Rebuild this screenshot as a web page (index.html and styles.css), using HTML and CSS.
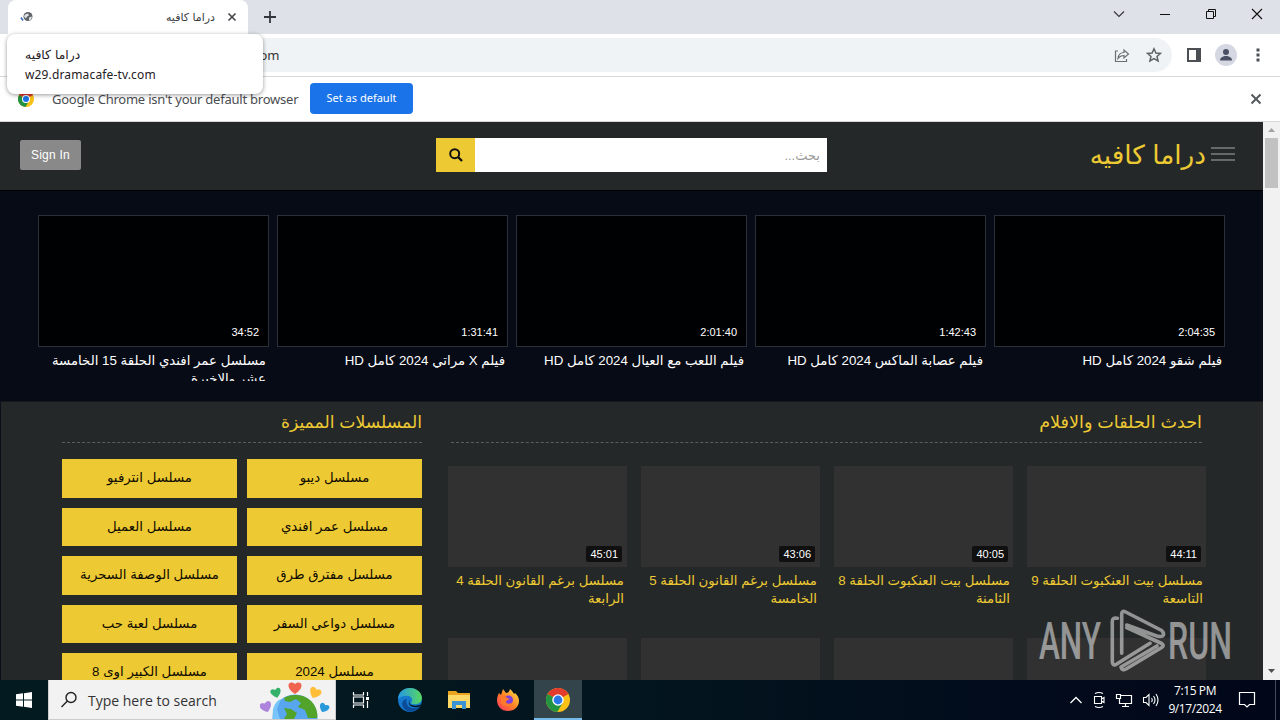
FILE: index.html
```html
<!DOCTYPE html>
<html lang="ar">
<head>
  <meta charset="UTF-8">
  <meta name="viewport" content="width=device-width, initial-scale=1.0">
  <title>دراما كافيه</title>
  <link rel="stylesheet" href="styles.css">
</head>
<body>
  <div class="tabstrip">
    <div class="tab">
      <svg class="favicon" width="14" height="14" viewBox="0 0 14 14"><circle cx="8" cy="6.500" r="4.500" fill="#5f6368"/><path d="M5 4.500l3-1 1 2-2 1-1 2-2-2zM9 7.500l3-1-1 3-2 1z" fill="#dfe3e8"/><path d="M1 7.500l2 3" fill="none" stroke="#3b6fc4" stroke-width="1.600"/></svg>
      <span class="tab-title" dir="rtl">دراما كافيه</span>
      <svg class="tab-close" width="10" height="10" viewBox="0 0 10 10"><path d="M1.500 1.500l7 7M8.500 1.500l-7 7" stroke="#45494d" stroke-width="1.700"/></svg>
    </div>
    <svg class="new-tab" width="12" height="12" viewBox="0 0 12 12"><path d="M6 0v12M0 6h12" stroke="#33373b" stroke-width="1.800"/></svg>
    <div class="window-buttons">
      <svg width="12" height="12" viewBox="0 0 12 12"><path d="M1 3.500l5 5 5-5" fill="none" stroke="#333" stroke-width="1.100"/></svg>
      <svg width="12" height="12" viewBox="0 0 12 12"><path d="M1 6.500h10" stroke="#111"/></svg>
      <svg width="12" height="12" viewBox="0 0 12 12"><path d="M1.500 3.500h7v7h-7zM3.500 3.500v-2h7v7h-2" fill="none" stroke="#111"/></svg>
      <svg width="12" height="12" viewBox="0 0 12 12"><path d="M1 1l10 10M11 1L1 11" stroke="#111" stroke-width="1.100"/></svg>
    </div>
  </div>

  <div class="toolbar">
    <div class="address">
      <span class="url">w29.dramacafe-tv.com</span>
      <svg width="16" height="16" viewBox="0 0 16 16"><path d="M4 4H1.500v10.500h11V12M4 11.500c.5-4.500 3-6 6-6V3l4.500 4-4.500 4V8.500c-2.500 0-4.500 1-6 3z" fill="none" stroke="#6b6f74" stroke-width="1.200"/></svg>
      <svg width="16" height="16" viewBox="0 0 16 16"><path d="M8 1.800l1.900 4.200 4.600.4-3.500 3 1.100 4.500L8 11.500l-4.100 2.400L5 9.400l-3.500-3 4.600-.4z" fill="none" stroke="#5f6368" stroke-width="1.500"/></svg>
    </div>
    <svg class="side-panel" width="14" height="14" viewBox="0 0 14 14"><path d="M1 1h12v12H1z" fill="none" stroke="#4b4f54" stroke-width="2"/><path d="M9 1h4v12H9z" fill="#4b4f54"/></svg>
    <svg class="avatar" width="22" height="22" viewBox="0 0 22 22"><circle cx="11" cy="11" r="11" fill="#d5d8e3"/><circle cx="11" cy="8" r="3" fill="#4a4f63"/><path d="M5 16.500c0-3 3-4.500 6-4.500s6 1.500 6 4.500z" fill="#4a4f63"/></svg>
    <svg class="menu-dots" width="4" height="14" viewBox="0 0 4 14"><path d="M.5.5h3v3h-3zM.5 5.500h3v3h-3zM.5 10.500h3v3h-3z" fill="#4b4f54"/></svg>
  </div>

  <div class="infobar">
    <svg class="chrome-logo" width="18" height="18" viewBox="0 0 18 18"><circle cx="9" cy="9" r="8" fill="#fbc116"/><path d="M9 9L2 5a8 8 0 0 1 14 0z" fill="#e33b2e"/><path d="M9 9L2 5a8 8 0 0 0 6.500 12L12 11z" fill="#229342"/><circle cx="9" cy="9" r="4" fill="#fff"/><circle cx="9" cy="9" r="3" fill="#1a73e8"/></svg>
    <span class="infobar-text">Google Chrome isn't your default browser</span>
    <button class="set-default">Set as default</button>
    <svg class="infobar-close" width="12" height="12" viewBox="0 0 12 12"><path d="M1.500 1.500l9 9M10.500 1.500l-9 9" stroke="#55595e" stroke-width="2"/></svg>
  </div>

  <div class="tab-tooltip">
    <div dir="rtl" class="tooltip-title">دراما كافيه</div>
    <div class="tooltip-host">w29.dramacafe-tv.com</div>
  </div>

  <div class="viewport">
    <div class="site" dir="rtl">
      <header class="header">
        <div class="brand">
          <div class="burger"><i></i><i></i><i></i></div>
          <a class="logo">دراما كافيه</a>
        </div>
        <div class="search">
          <input type="text" placeholder="بحث...">
          <button class="search-btn">
            <svg width="14" height="14" viewBox="0 0 14 14"><circle cx="5.700" cy="5.700" r="4.500" fill="none" stroke="#111" stroke-width="2"/><path d="M9 9l4 4" stroke="#111" stroke-width="2.400"/></svg>
          </button>
        </div>
        <button class="sign-in" dir="ltr">Sign In</button>
      </header>

      <section class="featured">
        <div class="movie">
          <div class="poster"><span class="time">2:04:35</span></div>
          <h3>فيلم شقو 2024 كامل HD</h3>
        </div>
        <div class="movie">
          <div class="poster"><span class="time">1:42:43</span></div>
          <h3>فيلم عصابة الماكس 2024 كامل HD</h3>
        </div>
        <div class="movie">
          <div class="poster"><span class="time">2:01:40</span></div>
          <h3>فيلم اللعب مع العيال 2024 كامل HD</h3>
        </div>
        <div class="movie">
          <div class="poster"><span class="time">1:31:41</span></div>
          <h3>فيلم X مراتي 2024 كامل HD</h3>
        </div>
        <div class="movie">
          <div class="poster"><span class="time">34:52</span></div>
          <h3>مسلسل عمر افندي الحلقة 15 الخامسة<br>عشر والاخيرة</h3>
        </div>
      </section>

      <main class="content">
        <section class="latest">
          <h2>احدث الحلقات والافلام</h2>
          <div class="episodes">
            <div class="episode">
              <div class="thumb"><span class="time">44:11</span></div>
              <h3>مسلسل بيت العنكبوت الحلقة 9<br>التاسعة</h3>
            </div>
            <div class="episode">
              <div class="thumb"><span class="time">40:05</span></div>
              <h3>مسلسل بيت العنكبوت الحلقة 8<br>الثامنة</h3>
            </div>
            <div class="episode">
              <div class="thumb"><span class="time">43:06</span></div>
              <h3>مسلسل برغم القانون الحلقة 5<br>الخامسة</h3>
            </div>
            <div class="episode">
              <div class="thumb"><span class="time">45:01</span></div>
              <h3>مسلسل برغم القانون الحلقة 4<br>الرابعة</h3>
            </div>
            <div class="episode"><div class="thumb"></div></div>
            <div class="episode"><div class="thumb"></div></div>
            <div class="episode"><div class="thumb"></div></div>
            <div class="episode"><div class="thumb"></div></div>
          </div>
        </section>

        <aside class="series">
          <h2>المسلسلات المميزة</h2>
          <div class="series-list">
            <a>مسلسل ديبو</a>
            <a>مسلسل انترفيو</a>
            <a>مسلسل عمر افندي</a>
            <a>مسلسل العميل</a>
            <a>مسلسل مفترق طرق</a>
            <a>مسلسل الوصفة السحرية</a>
            <a>مسلسل دواعي السفر</a>
            <a>مسلسل لعبة حب</a>
            <a>مسلسل 2024</a>
            <a>مسلسل الكبير اوى 8</a>
          </div>
        </aside>
      </main>
    </div>

    <div class="scrollbar">
      <svg width="17" height="16" viewBox="0 0 17 16"><path d="M5 10l3.500-4 3.500 4z" fill="#a3a3a3"/></svg>
      <div class="scroll-thumb"></div>
      <svg class="scroll-down" width="17" height="18" viewBox="0 0 17 18"><path d="M5 7l3.500 4 3.500-4z" fill="#505050"/></svg>
    </div>
  </div>

  <svg class="watermark" width="200" height="64" viewBox="0 0 200 64">
    <g class="watermark-text">
      <text x="1" y="50" textLength="62" lengthAdjust="spacingAndGlyphs">ANY</text>
      <text x="130" y="50" textLength="64" lengthAdjust="spacingAndGlyphs">RUN</text>
    </g>
    <path d="M79.300 9.300q-5-1-5 3v40q0 5 4 3L112 34.300M83.700 44.300V5q0-4 4-2l36 18.500q3 3 1 5.500-2 1-6 0L88.700 16M88.700 18.500l35 16q3 2 0 4L88 60q-4 2-5-2l36-21" fill="none" stroke="#fff" stroke-width="3.600" stroke-linejoin="round" stroke-linecap="round"/>
  </svg>

  <div class="taskbar">
    <div class="start"><svg width="16" height="16" viewBox="0 0 16 16"><path d="M0 2.300L7 1.300V7.500H0zM8 1.200L16 0v7.500H8zM0 8.500h7v6.200l-7-1zM8 8.500h8V16l-8-1.200z" fill="#fff"/></svg></div>
    <div class="task-search">
      <svg width="18" height="18" viewBox="0 0 18 18"><circle cx="11" cy="6.500" r="5" fill="none" stroke="#222" stroke-width="1.400"/><path d="M7.400 10.100L1.500 16" stroke="#222" stroke-width="1.400"/></svg>
      <span>Type here to search</span>
      <svg class="earth" width="72" height="39" viewBox="0 0 72 39">
        <circle cx="35" cy="37" r="22.500" fill="#58a6ee"/>
        <path d="M24 18c7-5 21-4 27 3 5 5 7 12 6 17h-9l-3-8-7-3 3-4-5-4-6 3-5-1zM24 28l7 1 6 4-3 6H24l3-5z" fill="#52a329"/>
        <path d="M13 33c-1-6 4-13 8-14l-4 10 3 10h-7z" fill="#78c4fb"/>
        <defs><path id="heart" d="M0 6C-11-1-6-9 0-4 6-9 11-1 0 6z"/></defs>
        <use href="#heart" transform="translate(35 8)" fill="#ef6550"/>
        <use href="#heart" transform="translate(16 13) rotate(-15) scale(.8)" fill="#35b16c"/>
        <use href="#heart" transform="translate(55 13) rotate(25) scale(.9)" fill="#ffbd38"/>
        <use href="#heart" transform="translate(6 27) rotate(-20) scale(.9)" fill="#ad83dc"/>
        <use href="#heart" transform="translate(64 28) rotate(25) scale(.75)" fill="#2a99dc"/>
      </svg>
    </div>
    <div class="task"><svg width="18" height="18" viewBox="0 0 18 18"><path d="M1.500 1v3h10V1M1.500 17v-3h10v3M1.500 6v6h10V6zM15.500 1v4M15.500 10v7" fill="none" stroke="#fff" stroke-width="1.200"/><path d="M14 6h3v3h-3z" fill="#fff"/></svg></div>
    <div class="task"><svg width="26" height="26" viewBox="0 0 24 24">
      <defs>
        <linearGradient id="edgeTop" x1="0" x2="1"><stop offset="0" stop-color="#2498e6"/><stop offset="1" stop-color="#58d95e"/></linearGradient>
        <linearGradient id="fox" x1="0" y1="1" x2="1" y2="0"><stop offset="0" stop-color="#ff2f62"/><stop offset=".5" stop-color="#ff8426"/><stop offset="1" stop-color="#ffe64a"/></linearGradient>
      </defs>
      <circle cx="12" cy="12" r="11" fill="#1479cf"/>
      <path d="M1 11C1 5 6 1 12 1c7 0 11 5 11 9 0 4-3 6-6 6-4 0-5-1-3-3 1-5-7-7-13-2z" fill="url(#edgeTop)"/>
      <path d="M9 11c-2 6 4 11 12 7-4 7-14 6-16-1-1-4 2-6 4-6z" fill="#0b4c98"/>
      <path d="M12 11c-3 5 3 8 11 5l-2 2c-6 2-13-1-9-7z" fill="#041a20"/>
    </svg></div>
    <div class="task"><svg width="22" height="20" viewBox="0 0 22 20"><path d="M0 1h8l2 2h12v15H0z" fill="#e9a51f"/><path d="M0 5h22v13H0z" fill="#ffd968"/><path d="M4 19v-8h14v8h-4v-4H8v4z" fill="#3b93d4"/></svg></div>
    <div class="task"><svg width="24" height="24" viewBox="0 0 24 24"><path d="M12 23C5.500 23 1 18.500 1 12c0-3 1-5 2-7l2 2 2-6 3 4c2 0 3-1 4-4 2 2 3 3 4 5l1-1c3 3 4 5 4 8 0 6-5 10-11 10z" fill="url(#fox)"/><circle cx="12.500" cy="12" r="4.500" fill="#7b3fe0"/><path d="M5 8c3-1 5 0 6 2l3 1-4 2c0 4 5 3 6 1-1 5-8 6-11 1z" fill="#ff7a2b"/></svg></div>
    <div class="task active"><svg width="24" height="24" viewBox="0 0 18 18"><circle cx="9" cy="9" r="9" fill="#fbc116"/><path d="M9 9L1.200 4.500A9 9 0 0 1 16.800 4.500z" fill="#e33b2e"/><path d="M9 9L1.200 4.500A9 9 0 0 0 8.500 18L12.500 11.200z" fill="#229342"/><circle cx="9" cy="9" r="4.300" fill="#fff"/><circle cx="9" cy="9" r="3.300" fill="#2a78e8"/></svg></div>
    <div class="tray">
      <svg width="14" height="14" viewBox="0 0 14 14"><path d="M1.500 10L7 4.500l5.500 5.500" fill="none" stroke="#fff" stroke-width="1.300"/></svg>
      <svg width="14" height="18" viewBox="0 0 14 18"><path d="M2.500 5.500h7v7h-7zM9.500 8l2.500-1.500v5L9.500 10M3 2.500q4-2 8 0M3 15.500q4 2 8 0" fill="none" stroke="#fff" stroke-width="1.100"/></svg>
      <svg width="18" height="16" viewBox="0 0 18 16"><path d="M6 3.500h10.500v8H4.500V7M1.500 2.500h4v4h-4zM10.500 11.500v3M7 14.500h7" fill="none" stroke="#fff" stroke-width="1.200"/></svg>
      <svg width="18" height="16" viewBox="0 0 18 16"><path d="M1.500 5.500H4l3-3v11l-3-3H1.500zM9.500 6q1.500 2 0 4M11.500 4q3 4 0 8M14 2q4 6 0 12" fill="none" stroke="#fff" stroke-width="1.100"/></svg>
    </div>
    <div class="clock"><div>7:15 PM</div><div>9/17/2024</div></div>
    <svg class="notify" width="18" height="18" viewBox="0 0 18 18"><path d="M1.500 1.500h15v12h-5L9 16l-2.500-2.500h-5z" fill="none" stroke="#fff" stroke-width="1.200"/></svg>
    <div class="show-desktop"></div>
  </div>
</body>
</html>
```

FILE: styles.css
```css
* {
  margin: 0;
  padding: 0;
  box-sizing: border-box;
}

body {
  width: 1280px;
  height: 720px;
  overflow: hidden;
  display: flex;
  flex-direction: column;
  font-family: "Noto Sans", "DejaVu Sans", sans-serif;
  background: #fff;
  position: relative;
}

svg {
  display: block;
  flex: none;
}

button {
  border: none;
  font-family: inherit;
}

/* browser */
.tabstrip {
  height: 34px;
  flex: none;
  background: #dee1e8;
  display: flex;
  align-items: center;
  padding-left: 8px;
}

.tab {
  width: 240px;
  height: 34px;
  background: #fff;
  border-radius: 8px 8px 0 0;
  display: flex;
  align-items: center;
  padding: 0 11px 0 12px;
}

.tab-title {
  flex: 1;
  font-family: "DejaVu Sans", sans-serif;
  font-size: 11px;
  color: #3c4043;
  padding-right: 12px;
}

.new-tab {
  margin-left: 16px;
}

.window-buttons {
  margin-left: auto;
  display: flex;
  gap: 34px;
  padding: 0 17px 6px 0;
}

.toolbar {
  height: 43px;
  flex: none;
  display: flex;
  align-items: center;
  border-bottom: 1px solid #d5d7da;
}

.address {
  width: 1074px;
  height: 34px;
  margin-left: 98px;
  border-radius: 17px;
  background: #f0f3f6;
  display: flex;
  align-items: center;
  gap: 16px;
  padding: 0 10px 0 43px;
}

.url {
  flex: 1;
  font-size: 13px;
  color: #333;
}

.side-panel {
  margin-left: 15px;
}

.avatar {
  margin-left: 14px;
}

.menu-dots {
  margin-left: 19px;
}

.infobar {
  height: 45px;
  flex: none;
  display: flex;
  align-items: center;
  padding: 0 18px 0 17px;
  border-bottom: 1px solid #d5d7da;
}

.infobar-text {
  width: 258px;
  margin-left: 17px;
  font-size: 13px;
  letter-spacing: -0.23px;
  white-space: nowrap;
  color: #4a4d51;
}

.set-default {
  width: 103px;
  height: 31px;
  margin-bottom: 1px;
  padding-bottom: 2px;
  border-radius: 4px;
  background: #1a73e8;
  color: #fff;
  font-size: 11px;
}

.infobar-close {
  margin-left: auto;
}

.tab-tooltip {
  position: absolute;
  left: 7px;
  top: 34px;
  width: 256px;
  height: 60px;
  padding: 11px 18px 0;
  border-radius: 8px;
  background: #fff;
  box-shadow: 0 1px 4px rgba(0, 0, 0, 0.4);
  font-size: 12px;
  line-height: 20px;
  color: #1f2124;
}

.tooltip-title {
  font-family: "DejaVu Sans", sans-serif;
  font-size: 12.4px;
  text-align: left;
}

.tooltip-host {
  letter-spacing: 0.15px;
}

/* page */
.viewport {
  height: 558px;
  flex: none;
  display: flex;
}

.site {
  width: 1263px;
  height: 558px;
  overflow: hidden;
  background: #252829;
  font-family: "Liberation Sans", "DejaVu Sans", sans-serif;
}

.header {
  height: 69px;
  display: flex;
  align-items: center;
  justify-content: space-between;
  padding: 0 28px 2px 20px;
  border-bottom: 1px solid #000;
}

.brand {
  width: 408px;
  display: flex;
  align-items: center;
}

.burger {
  width: 24px;
  margin-bottom: 2px;
  display: flex;
  flex-direction: column;
  gap: 4px;
}

.burger i {
  height: 2px;
  background: #666969;
}

.logo {
  margin-right: 5px;
  font-size: 26.3px;
  line-height: 30px;
  white-space: nowrap;
  color: #edca33;
}

.search {
  display: flex;
  width: 391px;
  height: 34px;
}

.search input {
  flex: 1;
  min-width: 0;
  border: none;
  padding: 0 7px;
  font-family: inherit;
  font-size: 13px;
  color: #333;
}

.search input::placeholder {
  color: #999;
}

.search-btn {
  width: 39px;
  background: #edca33;
  display: flex;
  align-items: center;
  justify-content: center;
}

.sign-in {
  width: 61px;
  height: 30px;
  margin-right: 355px;
  border-radius: 2px;
  background: #898989;
  color: #fff;
  font-size: 12px;
  letter-spacing: 0.25px;
}

.featured {
  height: 211px;
  padding: 24px 38px 0;
  display: flex;
  gap: 8px;
  background: #070b16;
  border-bottom: 1px solid #15181c;
}

.movie {
  width: 231px;
}

.poster {
  height: 132px;
  border: 1px solid #2b2f3b;
  background: #000103;
  display: flex;
  align-items: flex-end;
  padding: 0 9px 7px;
}

.time {
  font-size: 11px;
  line-height: 14px;
  color: #fff;
}

.movie h3 {
  height: 29px;
  margin-top: 5px;
  padding-right: 3px;
  overflow: hidden;
  font-size: 13.3px;
  line-height: 18px;
  font-weight: normal;
  white-space: nowrap;
  color: #fff;
}

.content {
  height: 278px;
  display: flex;
  padding: 0 57px 0 61px;
  border-left: 1px solid #0c101a;
}

h2 {
  height: 41px;
  font-size: 17.6px;
  line-height: 41px;
  font-weight: normal;
  color: #edca33;
  border-bottom: 1px dashed #5b5e60;
}

.latest {
  width: 758px;
}

.latest h2 {
  margin: 0 4px 0 3px;
}

.episodes {
  display: grid;
  grid-template-columns: repeat(4, 179px);
  grid-auto-rows: 172px;
  column-gap: 14px;
  margin-top: 23px;
}

.thumb {
  height: 101px;
  background: #313131;
  display: flex;
  align-items: flex-end;
  padding: 5px;
}

.thumb .time {
  padding: 1px 4px;
  border-radius: 2px;
  background: #101010;
}

.episode h3 {
  padding: 5px 3px 0;
  font-size: 13.3px;
  line-height: 18px;
  font-weight: normal;
  white-space: nowrap;
  color: #edca33;
}

.series {
  width: 360px;
  margin-right: 26px;
}

.series h2 {
  font-size: 17.2px;
}

.series-list {
  display: grid;
  grid-template-columns: 175px 175px;
  grid-auto-rows: 38.5px;
  gap: 10px;
  margin-top: 16px;
}

.series-list a {
  background: #edca33;
  color: #100b00;
  font-size: 13.3px;
  line-height: 38px;
  text-align: center;
  white-space: nowrap;
}

.scrollbar {
  width: 17px;
  background: #f1f1f1;
  display: flex;
  flex-direction: column;
}

.scroll-thumb {
  height: 50px;
  margin: 0 2px;
  background: #c1c1c1;
}

.scroll-down {
  margin-top: auto;
}

.watermark {
  position: absolute;
  left: 1038px;
  top: 609px;
  opacity: 0.5;
}

.watermark-text {
  fill: #fff;
  font-family: Roboto, sans-serif;
  font-size: 52px;
  font-weight: 500;
}

/* taskbar */
.taskbar {
  height: 40px;
  flex: none;
  display: flex;
  align-items: center;
  background: linear-gradient(90deg, #021a20, #03151e 50%, #020b1c 80%, #010718);
  color: #fff;
}

.start {
  width: 48px;
  display: flex;
  justify-content: center;
}

.task-search {
  width: 288px;
  height: 40px;
  display: flex;
  align-items: center;
  padding-left: 11px;
  background: #f2f2f2;
  border: 1px solid #ccc;
  border-top: none;
  color: #333;
  font-family: "Open Sans", sans-serif;
  font-size: 14px;
}

.task-search span {
  flex: 1;
  padding: 2px 0 0 10px;
}

.earth {
  align-self: flex-end;
  margin-right: 3px;
}

.task {
  width: 49px;
  height: 40px;
  display: flex;
  align-items: center;
  justify-content: center;
}

.task.active {
  width: 48px;
  margin-left: 2px;
  padding-top: 1px;
  background: #33444b;
  border-bottom: 2px solid #76b9ed;
}

.tray {
  margin-left: auto;
  display: flex;
  align-items: center;
  gap: 9px;
}

.clock {
  width: 70px;
  text-align: center;
  font-family: "Open Sans", sans-serif;
  font-size: 12px;
  line-height: 18px;
  letter-spacing: -0.4px;
}

.notify {
  margin: 0 19px 0 8px;
}

.show-desktop {
  width: 5px;
  height: 40px;
  border-left: 1px solid #444b5a;
}
```
